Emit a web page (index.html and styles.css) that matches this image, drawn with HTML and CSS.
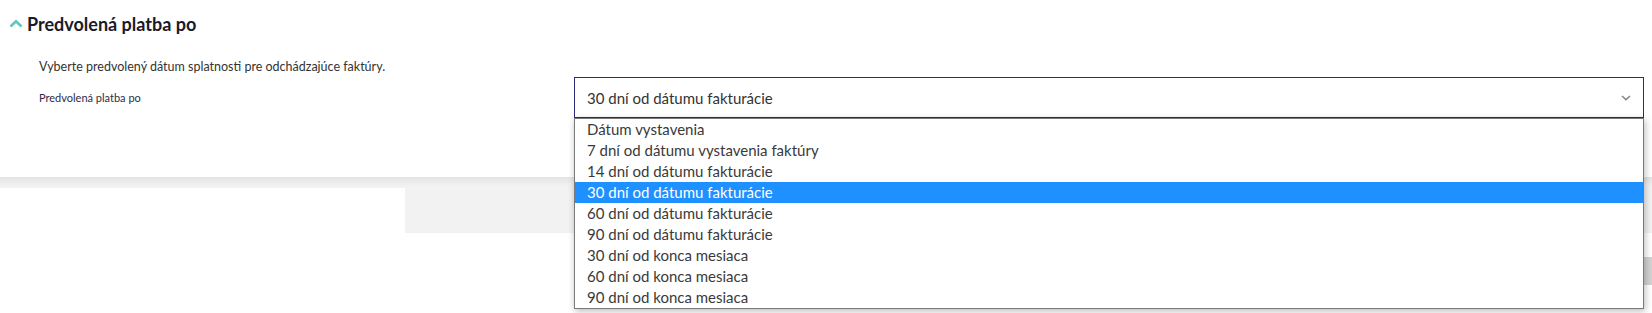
FILE: index.html
```html
<!DOCTYPE html>
<html lang="sk">
<head>
<meta charset="utf-8">
<title>Predvolená platba po</title>
<link rel="stylesheet" href="styles.css">
</head>
<body>
<section class="panel">
  <div class="heading">
    <svg class="caret" width="14" height="9" viewBox="0 0 14 9"><path d="M1.5 7.5 L7 2.2 L12.5 7.5" fill="none" stroke="#5fc6bf" stroke-width="2.6"/></svg>
    <h2>Predvolená platba po</h2>
  </div>
  <div class="content">
    <p class="desc">Vyberte predvolený dátum splatnosti pre odchádzajúce faktúry.</p>
    <div class="field">
      <label class="label">Predvolená platba po</label>
      <div class="select-wrap">
        <div class="select">
          <span>30 dní od dátumu fakturácie</span>
          <svg class="chev" width="10" height="6" viewBox="0 0 10 6"><path d="M1 1 L5 4.6 L9 1" fill="none" stroke="#8a8a8a" stroke-width="1.6"/></svg>
        </div>
        <ul class="options">
          <li>Dátum vystavenia</li>
          <li>7 dní od dátumu vystavenia faktúry</li>
          <li>14 dní od dátumu fakturácie</li>
          <li class="sel">30 dní od dátumu fakturácie</li>
          <li>60 dní od dátumu fakturácie</li>
          <li>90 dní od dátumu fakturácie</li>
          <li>30 dní od konca mesiaca</li>
          <li>60 dní od konca mesiaca</li>
          <li>90 dní od konca mesiaca</li>
        </ul>
      </div>
    </div>
  </div>
</section>
<section class="band">
  <div class="card"></div>
</section>
<section class="below">
  <div class="stub"></div>
</section>
</body>
</html>
```

FILE: styles.css
```css
html, body {
  margin: 0;
  padding: 0;
  background: #fff;
  font-family: Lato, "Open Sans", sans-serif;
}
body {
  min-height: 313px;
}
.panel {
  height: 177px;
  box-sizing: border-box;
  padding: 12px 0 0 9px;
  background: #fff;
}
.heading {
  display: flex;
  align-items: center;
  gap: 4px;
}
.caret {
  display: block;
  margin-top: -2px;
}
.heading h2 {
  margin: 0;
  font-size: 18px;
  line-height: 24px;
  font-weight: 700;
  color: #1a1a28;
}
.content {
  padding-left: 30px;
}
.desc {
  margin: 21px 0 0;
  font-size: 12.5px;
  line-height: 20px;
  color: #333;
}
.field {
  margin-top: 0;
  display: grid;
  grid-template-columns: 535px 1070px;
}
.label {
  margin-top: 13px;
  font-size: 11px;
  line-height: 16px;
  color: #2c2c4a;
}
.select-wrap {
  position: relative;
}
.select {
  height: 41px;
  box-sizing: border-box;
  border: 1px solid #2e2a7a;
  background: #fff;
  display: flex;
  align-items: center;
  justify-content: space-between;
  padding: 0 12px 0 12px;
  font-size: 15px;
  color: #333;
}
.chev {
  display: block;
  margin-top: 1px;
}
.options {
  position: absolute;
  left: 0;
  right: 0;
  top: 41px;
  margin: 0;
  padding: 0;
  list-style: none;
  background: #fff;
  border: 1px solid #7a7a7a;
  box-shadow: 1px 2px 7px rgba(0, 0, 0, 0.28);
  z-index: 2;
}
.options li {
  height: 21px;
  line-height: 21px;
  padding-left: 12px;
  font-size: 15px;
  color: #3a3a3a;
}
.options li.sel {
  background: #1e90ff;
  color: #fff;
}
.band {
  height: 56px;
  background: linear-gradient(#e3e3e3, #f2f2f2 9px);
  display: flex;
  align-items: flex-end;
}
.card {
  width: 405px;
  height: 45px;
  background: #fff;
}
.below {
  display: flex;
  justify-content: flex-end;
  padding-top: 24px;
}
.stub {
  width: 8px;
  height: 28px;
  background: #d2d2d2;
}
```
